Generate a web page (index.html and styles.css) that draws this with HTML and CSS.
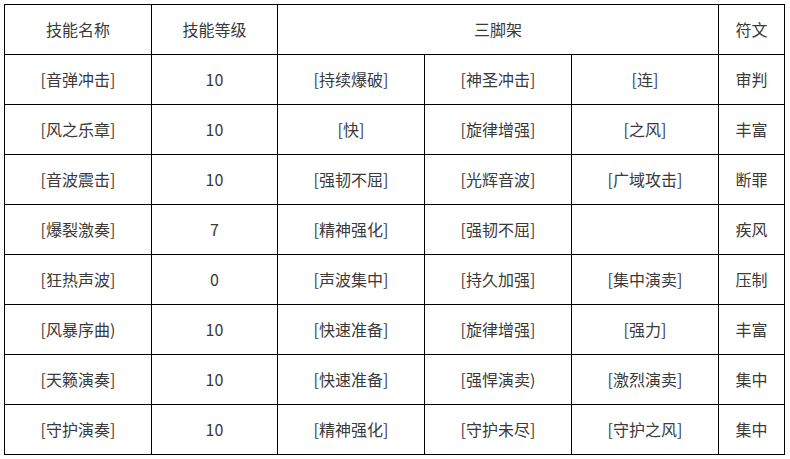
FILE: index.html
```html
<!DOCTYPE html>
<html lang="zh">
<head>
<meta charset="utf-8">
<link rel="stylesheet" href="styles.css">
</head>
<body>
<table class="skills">
  <colgroup>
    <col class="c-name"><col class="c-level"><col class="c-t"><col class="c-t"><col class="c-t"><col class="c-rune">
  </colgroup>
  <tr><td>技能名称</td><td>技能等级</td><td colspan="3">三脚架</td><td>符文</td></tr>
  <tr><td>[音弹冲击]</td><td>10</td><td>[持续爆破]</td><td>[神圣冲击]</td><td>[连]</td><td>审判</td></tr>
  <tr><td>[风之乐章]</td><td>10</td><td>[快]</td><td>[旋律增强]</td><td>[之风]</td><td>丰富</td></tr>
  <tr><td>[音波震击]</td><td>10</td><td>[强韧不屈]</td><td>[光辉音波]</td><td>[广域攻击]</td><td>断罪</td></tr>
  <tr><td>[爆裂激奏]</td><td>7</td><td>[精神强化]</td><td>[强韧不屈]</td><td></td><td>疾风</td></tr>
  <tr><td>[狂热声波]</td><td>0</td><td>[声波集中]</td><td>[持久加强]</td><td>[集中演卖]</td><td>压制</td></tr>
  <tr><td>[风暴序曲)</td><td>10</td><td>[快速准备]</td><td>[旋律增强]</td><td>[强力]</td><td>丰富</td></tr>
  <tr><td>[天籁演奏]</td><td>10</td><td>[快速准备]</td><td>[强悍演卖)</td><td>[激烈演卖]</td><td>集中</td></tr>
  <tr><td>[守护演奏]</td><td>10</td><td>[精神强化]</td><td>[守护未尽]</td><td>[守护之风]</td><td>集中</td></tr>
</table>
</body>
</html>
```

FILE: styles.css
```css
html, body {
  margin: 0;
  padding: 0;
  background: #fff;
}
body {
  padding: 4px;
}
.skills {
  border-collapse: collapse;
  table-layout: fixed;
  width: 780px;
  font-family: "Noto Sans CJK SC", "Noto Sans", sans-serif;
  font-size: 16px;
  color: #3a3a3a;
}
.c-name { width: 147px; }
.c-level { width: 126px; }
.c-t { width: 147px; }
.c-rune { width: 66px; }
.skills td {
  border: 1px solid #000;
  height: 47px;
  padding: 0 0 2px;
  text-align: center;
  vertical-align: middle;
  line-height: 20px;
}
```
